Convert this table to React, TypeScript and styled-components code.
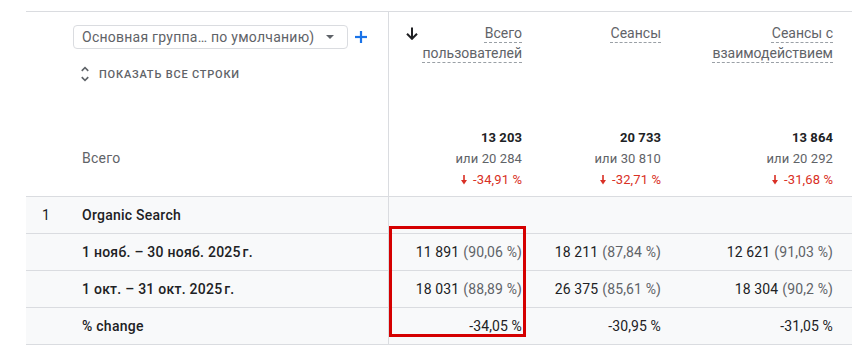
import React from "react";
import styled, { createGlobalStyle } from "styled-components";

const GlobalStyle = createGlobalStyle`
  html, body { margin: 0; padding: 0; background: #ffffff; }
  body {
    font-family: Roboto, "Noto Sans", Arial, sans-serif;
    color: #202124;
  }
`;

const COLS = "56px 306px 150px 139px 1fr";
const LINE = "#dadce0";

const Page = styled.div`
  width: 852px;
  box-sizing: border-box;
  padding: 11px 0 0 26px;
`;

const Table = styled.div`
  position: relative;
`;

const HeaderRow = styled.div`
  display: grid;
  grid-template-columns: ${COLS};
  grid-template-rows: 108px 76px;
  border-top: 1px solid ${LINE};
  background: #ffffff;
`;

const DataRow = styled.div<{ $last?: boolean }>`
  display: grid;
  grid-template-columns: ${COLS};
  box-sizing: border-box;
  height: ${(p) => (p.$last ? 38 : 37)}px;
  border-top: 1px solid ${LINE};
  border-bottom: ${(p) => (p.$last ? `1px solid ${LINE}` : "none")};
  background: #f8f9fa;
`;

const Controls = styled.div`
  grid-column: 1 / 3;
  display: flex;
  flex-direction: column;
  align-items: flex-start;
  padding: 13px 0 0 47px;
`;

const SelectLine = styled.div`
  display: flex;
  align-items: center;
  gap: 7px;
`;

const Select = styled.div`
  width: 275px;
  height: 24px;
  box-sizing: border-box;
  border: 1px solid ${LINE};
  border-radius: 4px;
  display: flex;
  align-items: center;
  justify-content: space-between;
  padding: 0 13px 0 8px;
  font-size: 14px;
  letter-spacing: 0.25px;
  color: #5f6368;
  white-space: nowrap;
`;

const ShowAll = styled.div`
  margin-top: 15px;
  display: flex;
  align-items: center;
  gap: 4px;
  font-size: 11px;
  font-weight: 500;
  letter-spacing: 0.8px;
  text-transform: uppercase;
  color: #5f6368;
  svg { margin-left: 2px; }
`;

const TotalLabel = styled.div`
  grid-column: 2;
  align-self: center;
  font-size: 14px;
  letter-spacing: 0.25px;
  color: #5f6368;
`;

const MetricCell = styled.div<{ $first?: boolean; $pr?: number }>`
  border-left: ${(p) => (p.$first ? `1px solid ${LINE}` : "none")};
  padding-right: ${(p) => p.$pr ?? 16}px;
  padding-left: 16px;
  box-sizing: border-box;
`;

const TitleCell = styled(MetricCell)`
  padding-top: 11px;
  display: flex;
  justify-content: space-between;
  align-items: flex-start;
  svg { margin: 4px 0 0 1px; flex: none; }
`;

const Title = styled.div`
  flex: 1;
  text-align: right;
  font-size: 14px;
  line-height: 20px;
  color: #5f6368;
`;

const Dashed = styled.span`
  text-decoration: underline dashed #9aa0a6 1px;
  text-underline-offset: 4px;
`;

const TotalsCell = styled(MetricCell)`
  padding-top: 7px;
  display: flex;
  flex-direction: column;
  align-items: flex-end;
  font-size: 13px;
  line-height: 21px;
  letter-spacing: 0.1px;
`;

const TotalValue = styled.div`
  font-weight: 700;
  color: #202124;
`;

const TotalPrev = styled.div`
  color: #5f6368;
`;

const Delta = styled.div`
  display: flex;
  align-items: center;
  gap: 6px;
  color: #d93025;
`;

const IndexCell = styled.div`
  display: flex;
  align-items: center;
  padding-left: 16px;
  font-size: 14px;
  color: #202124;
`;

const LabelCell = styled.div`
  display: flex;
  align-items: center;
  font-size: 14px;
  font-weight: 500;
  letter-spacing: 0.25px;
  color: #202124;
`;

const ValueCell = styled(MetricCell)`
  display: flex;
  align-items: center;
  justify-content: flex-end;
  font-size: 14px;
  letter-spacing: 0.12px;
  color: #202124;
  white-space: nowrap;
`;

const Share = styled.span`
  color: #5f6368;
  margin-left: 4px;
`;

const Highlight = styled.div`
  position: absolute;
  left: 363px;
  top: 215px;
  width: 137px;
  height: 111px;
  box-sizing: border-box;
  border: 3px solid #d50000;
  pointer-events: none;
`;

const DropIcon = () => (
  <svg width="8" height="4" viewBox="0 0 8 4">
    <path d="M0 0h8L4 4z" fill="#5f6368" />
  </svg>
);

const PlusIcon = () => (
  <svg width="12" height="12" viewBox="0 0 12 12">
    <rect x="4.9" y="0" width="2.2" height="12" fill="#1a73e8" />
    <rect x="0" y="4.9" width="12" height="2.2" fill="#1a73e8" />
  </svg>
);

const UnfoldIcon = () => (
  <svg width="20" height="20" viewBox="0 0 24 24">
    <path
      fill="#5f6368"
      d="M12 5.83L15.17 9l1.41-1.41L12 3 7.41 7.59 8.83 9 12 5.83zm0 12.34L8.83 15l-1.41 1.41L12 21l4.59-4.59L15.17 15 12 18.17z"
    />
  </svg>
);

const SortIcon = () => (
  <svg width="12" height="13" viewBox="0 0 12 13">
    <path
      d="M6 0.5V11.5M1 6.8L6 11.8L11 6.8"
      stroke="#202124"
      strokeWidth="2"
      fill="none"
    />
  </svg>
);

const DownSmall = () => (
  <svg width="6" height="10" viewBox="0 0 6 10">
    <rect x="2.2" y="0" width="1.6" height="6" fill="#d93025" />
    <path d="M0 5h6L3 9.5z" fill="#d93025" />
  </svg>
);

type Metric = {
  title: React.ReactNode;
  total: string;
  prev: string;
  delta: string;
  nov: [string, string];
  oct: [string, string];
  change: string;
  pr?: number;
};

const metrics: Metric[] = [
  {
    title: (
      <>
        <Dashed>Всего</Dashed>
        <br />
        <Dashed>пользователей</Dashed>
      </>
    ),
    total: "13 203",
    prev: "или 20 284",
    delta: "-34,91 %",
    nov: ["11 891", "(90,06 %)"],
    oct: ["18 031", "(88,89 %)"],
    change: "-34,05 %",
  },
  {
    title: <Dashed>Сеансы</Dashed>,
    total: "20 733",
    prev: "или 30 810",
    delta: "-32,71 %",
    nov: ["18 211", "(87,84 %)"],
    oct: ["26 375", "(85,61 %)"],
    change: "-30,95 %",
  },
  {
    title: (
      <>
        <Dashed>Сеансы с</Dashed>
        <br />
        <Dashed>взаимодействием</Dashed>
      </>
    ),
    total: "13 864",
    prev: "или 20 292",
    delta: "-31,68 %",
    nov: ["12 621", "(91,03 %)"],
    oct: ["18 304", "(90,2 %)"],
    change: "-31,05 %",
    pr: 19,
  },
];

export default function App() {
  return (
    <>
      <GlobalStyle />
      <Page>
        <Table>
          <HeaderRow>
            <Controls>
              <SelectLine>
                <Select>
                  <span>Основная группа… по умолчанию)</span>
                  <DropIcon />
                </Select>
                <PlusIcon />
              </SelectLine>
              <ShowAll>
                <UnfoldIcon />
                <span>Показать все строки</span>
              </ShowAll>
            </Controls>
            {metrics.map((m, i) => (
              <TitleCell key={"t" + i} $first={i === 0} $pr={m.pr}>
                {i === 0 ? <SortIcon /> : null}
                <Title>{m.title}</Title>
              </TitleCell>
            ))}
            <TotalLabel>Всего</TotalLabel>
            {metrics.map((m, i) => (
              <TotalsCell key={"s" + i} $first={i === 0} $pr={m.pr}>
                <TotalValue>{m.total}</TotalValue>
                <TotalPrev>{m.prev}</TotalPrev>
                <Delta>
                  <DownSmall />
                  <span>{m.delta}</span>
                </Delta>
              </TotalsCell>
            ))}
          </HeaderRow>

          <DataRow>
            <IndexCell>1</IndexCell>
            <LabelCell>Organic Search</LabelCell>
            {metrics.map((m, i) => (
              <ValueCell key={"o" + i} $first={i === 0} $pr={m.pr} />
            ))}
          </DataRow>

          <DataRow>
            <IndexCell />
            <LabelCell>1 нояб. – 30 нояб. 2025&#8239;г.</LabelCell>
            {metrics.map((m, i) => (
              <ValueCell key={"n" + i} $first={i === 0} $pr={m.pr}>
                {m.nov[0]}
                <Share>{m.nov[1]}</Share>
              </ValueCell>
            ))}
          </DataRow>

          <DataRow>
            <IndexCell />
            <LabelCell>1 окт. – 31 окт. 2025&#8239;г.</LabelCell>
            {metrics.map((m, i) => (
              <ValueCell key={"c" + i} $first={i === 0} $pr={m.pr}>
                {m.oct[0]}
                <Share>{m.oct[1]}</Share>
              </ValueCell>
            ))}
          </DataRow>

          <DataRow $last>
            <IndexCell />
            <LabelCell>% change</LabelCell>
            {metrics.map((m, i) => (
              <ValueCell key={"p" + i} $first={i === 0} $pr={m.pr}>
                {m.change}
              </ValueCell>
            ))}
          </DataRow>

          <Highlight />
        </Table>
      </Page>
    </>
  );
}
